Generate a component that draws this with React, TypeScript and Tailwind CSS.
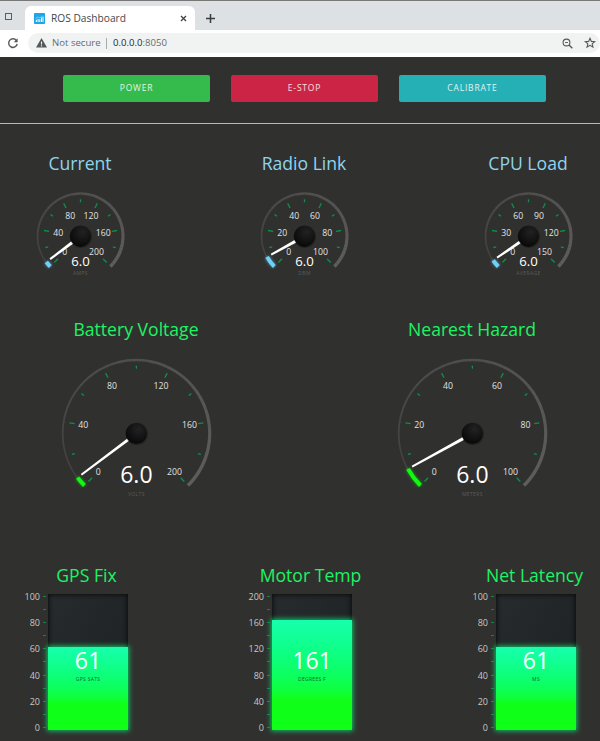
import React from "react";

const polar = (cx: number, cy: number, r: number, deg: number) => {
  const a = (deg * Math.PI) / 180;
  return [cx + r * Math.sin(a), cy - r * Math.cos(a)] as const;
};

const arc = (cx: number, cy: number, r: number, from: number, to: number) => {
  const [x1, y1] = polar(cx, cy, r, from);
  const [x2, y2] = polar(cx, cy, r, to);
  return `M${x1} ${y1}A${r} ${r} 0 ${to - from > 180 ? 1 : 0} 1 ${x2} ${y2}`;
};

type Label = [number, number];
type GaugeProps = { title: string; unit: string; max: number; value: number };
type DialProps = GaugeProps & {
  id: string;
  width: number;
  height: number;
  cx: number;
  cy: number;
  r: number;
  labels: Label[];
  labelSize: number;
  valueSize: number;
  valueY: number;
  unitY: number;
  color: string;
};

function Dial(p: DialProps) {
  const { cx, cy, r } = p;
  const end = -135 + (p.value / p.max) * 270;
  const segments = Array.from({ length: 54 }, (_, i) => i);
  const [nx1, ny1] = polar(cx, cy, 9, end);
  const [nx2, ny2] = polar(cx, cy, r - 5, end);
  const [ax, ay] = polar(nx1, ny1, 1.5, end - 90);
  const [bx, by] = polar(nx1, ny1, 1.5, end + 90);
  const [dx, dy] = polar(nx2, ny2, 1, end + 90);
  const [ex, ey] = polar(nx2, ny2, 1, end - 90);
  return (
    <svg width={p.width} height={p.height} className="block" fontFamily="'Open Sans', 'Noto Sans', sans-serif" textAnchor="middle">
      <defs>
        <radialGradient id={`${p.id}-hub`} cx="0.6" cy="0.3" r="0.75">
          <stop offset="0" stopColor="#222222" />
          <stop offset="1" stopColor="#070707" />
        </radialGradient>
        <filter id={`${p.id}-glow`} x="-100%" y="-100%" width="300%" height="300%">
          <feGaussianBlur stdDeviation="1.8" />
        </filter>
      </defs>
      {segments.map((i) => {
        const c = Math.round(64 + (i / 53) * 30);
        return (
          <path
            key={i}
            d={arc(cx, cy, r - (i / 53) * 0.6, -135 + i * 5, -135 + i * 5 + 5.3)}
            fill="none"
            stroke={`rgb(${c},${c},${c})`}
            strokeWidth={1.5 + (i / 53) * 2}
          />
        );
      })}
      {Array.from({ length: 11 }, (_, i) => {
        const a = -135 + i * 27;
        const outer = r - 6;
        const [x1, y1] = polar(cx, cy, outer, a);
        const [x2, y2] = polar(cx, cy, outer - (i % 2 ? 3 : 5.2), a);
        return <line key={i} x1={x1} y1={y1} x2={x2} y2={y2} stroke="#099349" strokeWidth="1.3" />;
      })}
      <path d={arc(cx, cy, r - 0.3, -135, end)} fill="none" stroke={p.color} strokeWidth="4.5" opacity="0.6" filter={`url(#${p.id}-glow)`} />
      <path d={arc(cx, cy, r - 0.3, -135, end)} fill="none" stroke={p.color} strokeWidth="4" />
      {p.labels.map(([x, y], i) => (
        <text key={i} x={x} y={y} fontSize={p.labelSize} fill="#e2e2e2">
          {(p.max / 5) * i}
        </text>
      ))}
      <path d={`M${ax} ${ay}L${bx} ${by}L${dx} ${dy}L${ex} ${ey}Z`} fill="#ffffff" />
      <circle cx={cx + 0.4} cy={cy + 0.5} r="11.2" fill="#000000" opacity="0.25" />
      <circle cx={cx} cy={cy} r="10.6" fill={`url(#${p.id}-hub)`} />
      <text x={cx} y={p.valueY} fontSize={p.valueSize} fill="#ffffff">
        {p.value.toFixed(1)}
      </text>
      <text x={cx} y={p.unitY} fontSize="5" letterSpacing="0.4" fill="#5c5c5b">
        {p.unit}
      </text>
    </svg>
  );
}

function SmallGauge(p: GaugeProps) {
  return (
    <div className="flex w-36 flex-col items-center">
      <h2 className="h-6 text-[17.6px] leading-6 whitespace-nowrap text-[#8ed4ee]">{p.title}</h2>
      <Dial
        {...p}
        id={p.unit}
        width={144}
        height={105}
        cx={72.5}
        cy={61.3}
        r={43}
        labels={[[56.7, 80.2], [50.3, 60.6], [62.2, 43.6], [83, 43.6], [95.2, 60.6], [88.5, 80.2]]}
        labelSize={8.7}
        valueSize={13.2}
        valueY={91}
        unitY={100}
        color="#6fd0f8"
      />
    </div>
  );
}

function LargeGauge(p: GaugeProps) {
  return (
    <div className="flex w-64 flex-col items-center">
      <h2 className="h-6 text-[17.6px] leading-6 whitespace-nowrap text-[#1bf464]">{p.title}</h2>
      <Dial
        {...p}
        id={p.unit}
        width={256}
        height={165}
        cx={128.4}
        cy={92.5}
        r={73.8}
        labels={[[90.3, 133.9], [75.3, 87], [104, 47.7], [153, 47.7], [181.5, 87], [166.5, 133.9]]}
        labelSize={8.7}
        valueSize={23}
        valueY={141.7}
        unitY={155}
        color="#10fa10"
      />
    </div>
  );
}

function Tank({ title, unit, max, value }: GaugeProps) {
  const ticks = Array.from({ length: 11 }, (_, i) => 10 - i);
  return (
    <div className="flex w-32 flex-col items-center">
      <h2 className="mr-[3px] h-6 text-[17.6px] leading-6 whitespace-nowrap text-[#1bf464]">{title}</h2>
      <div className="mt-[7px] grid h-[136px] w-32 grid-cols-[24px_80px_24px]">
        <div className="-ml-6 flex flex-col justify-between pt-[2px] pb-[2px]">
          {ticks.map((n) => (
            <div key={n} className="flex h-px items-center justify-end gap-[3px] pr-[2px]">
              <span className="text-[9px] leading-none text-[#c8c8c6]">{n % 2 === 0 ? (max / 10) * n : ""}</span>
              <i className="h-px w-[3px] bg-[#088b48]" />
            </div>
          ))}
        </div>
        <div className="relative flex flex-col justify-end bg-linear-to-br from-[#272b2d] to-[#1c2022] shadow-[inset_0_0_4px_1px_#0b0d0d]">
          <div
            className={
              value / max > 0.7
                ? "bg-linear-to-b from-[#17ffad] to-[#10ff18] to-72% shadow-[0_0_5px_1px_#12c467]"
                : "bg-linear-to-b from-[#17ffad] to-[#10ff18] to-68% shadow-[0_0_5px_1px_#12c467]"
            }
            style={{ height: Math.round((value / max) * 131.5) + (max > 100 ? 4 : 3) }}
          />
          <div className="absolute inset-x-0 top-[50px] flex flex-col items-center">
            <span className="text-[23px] leading-8 text-white">{value}</span>
            <span className="text-[5px] leading-[6px] tracking-[0.3px] text-[#0b6a2c]">{unit}</span>
          </div>
        </div>
      </div>
    </div>
  );
}

function Browser() {
  return (
    <header className="h-[57px] bg-white text-[9.6px] text-[#454749]">
      <div className="flex h-[30px] border-t border-[#777875] bg-[#dee1e4] pt-[5px]">
        <div className="flex w-[25px] items-center pb-[4px] pl-[5px]">
          <div className="h-[7px] w-[7px] border-[1.5px] border-[#5b5d5f]" />
        </div>
        <div className="flex h-6 w-[170px] items-center rounded-t-md bg-white pt-px pl-[9px]">
          <svg width="11" height="11" viewBox="0 0 11 11" className="shrink-0">
            <rect width="11" height="11" rx="0.7" fill="#20a5e8" />
            <path d="M2.3 9V6.8M4.1 9V6M5.8 9V6.3M7.5 9V4.5M9 9V3.6" stroke="#fff" strokeWidth="1" />
            <path d="M1.8 5.4l2.2-1.4 1.8 1 2-2.2" fill="none" stroke="#d6f0ff" strokeWidth="0.8" strokeDasharray="1 0.7" />
          </svg>
          <span className="ml-[6px] flex-1 text-[10.2px]">ROS Dashboard</span>
          <svg width="7" height="7" className="mr-[8px]">
            <path d="M1 1l5 5M6 1l-5 5" stroke="#3f4143" strokeWidth="1.3" />
          </svg>
        </div>
        <svg width="11" height="11" className="mt-[7px] ml-[10px]">
          <path d="M5.5 1v9M1 5.5h9" stroke="#3a3c3e" strokeWidth="1.5" />
        </svg>
      </div>
      <div className="flex h-[26px] items-center">
        <svg width="12" height="12" viewBox="0 0 12 12" className="ml-[7px]">
          <path d="M9.4 3.5A4.3 4.3 0 1 0 10.2 7" fill="none" stroke="#55585a" strokeWidth="1.4" />
          <path d="M10.6 1.2v4H6.8z" fill="#55585a" />
        </svg>
        <div className="ml-[9px] flex h-5 flex-1 items-center rounded-full bg-[#f1f3f3] pr-[4px] pl-[8px]">
          <svg width="11" height="10" viewBox="0 0 11 10">
            <path d="M5.5 0L11 9.6H0z" fill="#55585a" />
            <path d="M5.5 3.4v3M5.5 7.3v1.1" stroke="#f1f3f3" strokeWidth="1.1" />
          </svg>
          <span className="ml-[5px] w-[48px] whitespace-nowrap text-[#686b6e]">Not secure</span>
          <i className="mx-[6px] h-[11px] w-px bg-[#a9abad]" />
          <span className="text-[#252729]">0.0.0.0</span>
          <span className="flex-1 text-[#686b6e]">:8050</span>
          <svg width="11" height="11" viewBox="0 0 11 11" fill="none" stroke="#55585a" className="mr-[11px]">
            <circle cx="4.5" cy="4.5" r="3.4" strokeWidth="1.1" />
            <path d="M7 7l3.3 3.3" strokeWidth="1.4" />
            <path d="M3 4.5h3" strokeWidth="0.9" />
          </svg>
          <svg width="12" height="12" viewBox="0 0 12 12">
            <path d="M6 1.3l1.35 3.1 3.4.3-2.6 2.2.8 3.3L6 8.4l-2.95 1.8.8-3.3-2.6-2.2 3.4-.3z" fill="none" stroke="#55585a" strokeWidth="1.1" />
          </svg>
        </div>
      </div>
    </header>
  );
}

export default function App() {
  const button = "h-[27px] w-[147px] rounded-xs text-[8.5px] font-medium tracking-[0.8px] text-white/85";
  return (
    <main className="h-[741px] w-[600px] overflow-hidden bg-[#30302e] font-['Open_Sans','Noto_Sans',sans-serif]">
      <Browser />
      <nav className="flex h-[67px] gap-[21px] border-b border-[#b9b9b7] pt-[18px] pl-[63px]">
        <button className={`${button} bg-[#34bb4b]`}>POWER</button>
        <button className={`${button} bg-[#cc2444]`}>E-STOP</button>
        <button className={`${button} bg-[#24b0b4]`}>CALIBRATE</button>
      </nav>
      <section className="mt-[27px] flex justify-between pl-2">
        <SmallGauge title="Current" unit="AMPS" max={200} value={6} />
        <SmallGauge title="Radio Link" unit="DBM" max={100} value={6} />
        <SmallGauge title="CPU Load" unit="AVERAGE" max={150} value={6} />
      </section>
      <section className="mt-[37px] flex justify-between pl-2">
        <LargeGauge title="Battery Voltage" unit="VOLTS" max={200} value={6} />
        <LargeGauge title="Nearest Hazard" unit="METERS" max={100} value={6} />
      </section>
      <section className="mt-[57px] flex justify-between pl-6">
        <Tank title="GPS Fix" unit="GPS SATS" max={100} value={61} />
        <Tank title="Motor Temp" unit="DEGREES F" max={200} value={161} />
        <Tank title="Net Latency" unit="MS" max={100} value={61} />
      </section>
    </main>
  );
}
